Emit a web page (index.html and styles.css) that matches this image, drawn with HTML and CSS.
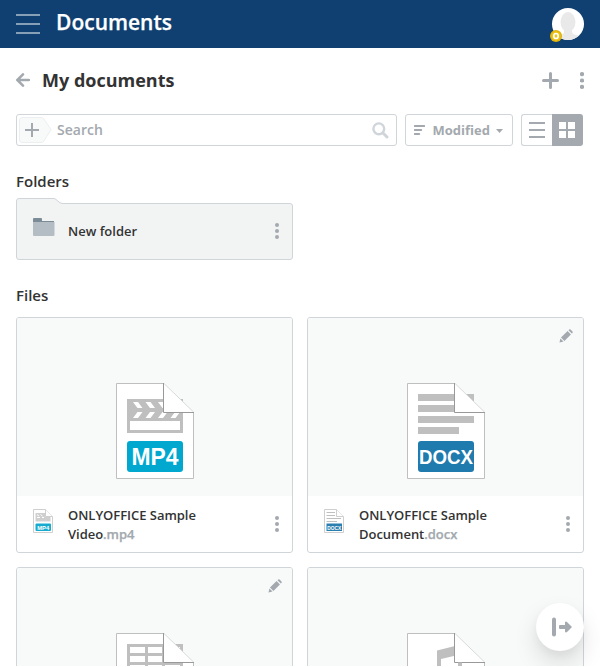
FILE: index.html
```html
<!DOCTYPE html>
<html lang="en">
<head>
<meta charset="utf-8">
<title>Documents</title>
<link rel="stylesheet" href="styles.css">
</head>
<body>
<svg class="defs" width="0" height="0">
  <defs>
    <symbol id="dots" viewBox="0 0 4 16"><circle cx="2" cy="2" r="2"/><circle cx="2" cy="8" r="2"/><circle cx="2" cy="14" r="2"/></symbol>
    <symbol id="pencil" viewBox="0 0 14 14"><path d="M.5 13.5l.9-4 3.1 3.1zM2 8.6l6.6-6.5 3.3 3.3L5.400 12zM9.500 1.300l.7-.7q.7-.5 1.300 0l2 2q.5.6 0 1.300l-.7.7z"/></symbol>
    <symbol id="page" viewBox="0 0 78 96"><path d="M.5.500H48L77.500 29.500V95.500H.5z" fill="#fff" stroke="none"/><path d="M47.500.500H.500V95.500H77.500V29.500" fill="none" stroke="#bfbfbf"/></symbol>
    <symbol id="fold" viewBox="0 0 78 96"><path d="M47.500 0V29.500H78z" fill="#fff"/><path d="M48 .5L77.500 29" fill="none" stroke="#d8dada"/><path d="M47.500 0V29.500H78" fill="none" stroke="#999"/></symbol>
    <symbol id="mp4" viewBox="0 0 78 96">
      <use href="#page"/>
      <path d="M11 16H67V50H11z" fill="#bfbfbf"/><path d="M14 38H64V47H14z" fill="#fff"/>
      <path d="M17 19h5l4.500 6h-5zM29.500 19h5l4.500 6h-5zM42 19h5l4.500 6h-5zM21.500 29h5L22 35h-5zM34 29h5L34.500 35h-5zM46.500 29h5L47 35h-5zM59 29h5L59.500 35h-5z" fill="#fff"/>
      <use href="#fold"/>
      <rect x="11" y="58" width="56" height="31" rx="3" fill="#00a8d0"/>
      <text x="39" y="82" class="tag" textLength="47" lengthAdjust="spacingAndGlyphs">MP4</text>
    </symbol>
    <symbol id="docx" viewBox="0 0 78 96">
      <use href="#page"/>
      <path d="M11 11H67v7H11zM11 22H67v7H11zM11 33H67v7H11zM11 44H52v7H11z" fill="#bfbfbf"/>
      <use href="#fold"/>
      <rect x="11" y="58" width="56" height="31" rx="3" fill="#1f7aae"/>
      <text x="39" y="81" class="tag tag-long" textLength="54" lengthAdjust="spacingAndGlyphs">DOCX</text>
    </symbol>
    <symbol id="xlsx" viewBox="0 0 78 96">
      <use href="#page"/>
      <path d="M11 11H67V51H11zM14 14V20H29V14zM32 14V20H46V14zM49 14V20H64V14zM14 23V29H29V23zM32 23V29H46V23zM49 23V29H64V23zM14 32V38H29V32zM32 32V38H46V32zM49 32V38H64V32z" fill="#bfbfbf" fill-rule="evenodd"/>
      <use href="#fold"/>
    </symbol>
    <symbol id="mp3" viewBox="0 0 78 96">
      <use href="#page"/>
      <path d="M30 17.500L54 11.500V46H51V22L34 26V50H30z" fill="#bfbfbf"/>
      <use href="#fold"/>
      <path d="M51 29.500h4V46h-4z" fill="#bfbfbf"/>
    </symbol>
  </defs>
</svg>
<div class="app">
  <header class="topbar">
    <svg class="burger" width="24" height="20"><path d="M0 1H24M0 10H24M0 19H24" stroke="#86a0b8" stroke-width="2"/></svg>
    <span class="module">Documents</span>
    <div class="user">
      <svg width="38" height="34">
        <defs><clipPath id="avatar"><circle cx="20" cy="16" r="16"/></clipPath></defs>
        <circle cx="20" cy="16" r="16" fill="#fff"/>
        <g clip-path="url(#avatar)" fill="#e9e9e9"><ellipse cx="20" cy="14" rx="7.500" ry="10"/><path d="M16 20h8v4q1 3 5 3l4 1v6H7v-6l4-1q5 0 5-3z"/></g>
        <circle cx="8" cy="28" r="6" fill="#e0b10b"/><circle cx="8" cy="28" r="4.700" fill="#edc315"/><ellipse cx="8" cy="28" rx="2.200" ry="2.500" fill="none" stroke="#fff" stroke-width="1.700"/>
      </svg>
    </div>
  </header>
  <main class="content">
    <div class="heading">
      <svg class="back" width="14" height="14"><path d="M13 7H1.500M7 1.300L1.300 7 7 12.700" fill="none" stroke="#a3a9ae" stroke-width="2.500" stroke-linecap="round"/></svg>
      <h1>My documents</h1>
      <svg class="add" width="17" height="17"><path d="M8.500 1.500V15.500M1.500 8.500H15.500" stroke="#a3a9ae" stroke-width="3" stroke-linecap="round"/></svg>
      <svg class="head-dots" width="4" height="17" viewBox="0 0 4 17"><circle cx="2" cy="2.100" r="2.100"/><circle cx="2" cy="8.500" r="2.100"/><circle cx="2" cy="14.900" r="2.100"/></svg>
    </div>
    <div class="toolbar">
      <div class="search">
        <svg width="33" height="26"><path d="M3 .5H22Q24 .5 25 2L32 12.500 25 24Q24 25.500 22 25.500H3Q.5 25.500.5 23V3Q.5.500 3 .5z" fill="#f8f9f9" stroke="#eceff1"/><path d="M13 6V20M6 13H20" stroke="#a3a9ae" stroke-width="2"/></svg>
        <span class="placeholder">Search</span>
        <svg class="lens" width="17" height="17"><circle cx="6.800" cy="6.800" r="5.400" fill="none" stroke="#d0d5da" stroke-width="2.400"/><path d="M11 11L15 15" stroke="#d0d5da" stroke-width="3" stroke-linecap="round"/></svg>
      </div>
      <div class="sort">
        <svg width="11" height="10"><path d="M.8 1H10.200M.8 5H7.200M.8 9H5.200" stroke="#a3a9ae" stroke-width="2" stroke-linecap="round"/></svg>
        <span>Modified</span>
        <svg class="caret" width="7" height="4"><path d="M0 0H7L3.500 4z" fill="#a3a9ae"/></svg>
      </div>
      <div class="views">
        <div class="view"><svg width="16" height="16"><path d="M0 1H16M0 8H16M0 15H16" stroke="#a3a9ae" stroke-width="2"/></svg></div>
        <div class="view active"><svg width="16" height="16" fill="#fff"><path d="M0 0H7V7H0zM9 0H16V7H9zM0 9H7V16H0zM9 9H16V16H9z"/></svg></div>
      </div>
    </div>
    <h2>Folders</h2>
    <div class="folder">
      <svg class="folder-shape" width="277" height="63"><path d="M3 .5H38Q39 .5 40 1.500L43 4Q45 5.500 47 5.500H274Q276.500 5.500 276.500 8V59Q276.500 61.500 274 61.500H3Q.5 61.500.5 59V3Q.5.500 3 .5z" fill="#f2f4f4" stroke="#d0d5da"/></svg>
      <div class="folder-row">
        <svg class="folder-icon" width="22" height="18"><path d="M0 1Q0 0 1 0H8Q9 0 9 1V3H21V6H0z" fill="#7b8c97"/><path d="M0 4H21.500V17Q21.500 18 20.500 18H1Q0 18 0 17z" fill="#b4bcc4"/></svg>
        <span class="name">New folder</span>
        <svg class="dots" width="4" height="16"><use href="#dots"/></svg>
      </div>
    </div>
    <h2 class="files-title">Files</h2>
    <div class="grid">
      <article class="card">
        <div class="preview"><svg width="78" height="96"><use href="#mp4"/></svg></div>
        <div class="info">
          <svg class="thumb" width="20" height="24" viewBox="0 0 20 24"><path d="M.5.500H12.500L19.500 7.500V23.500H.5z" fill="#fff" stroke="#cfcfcf"/><path d="M2.500 4H12.500V8H17.500V12.500H2.500z" fill="#cfcfcf"/><path d="M4 5.500l2 1.500M7.500 5.500l2 1.500M4 8.500H7M9 8.500H11" stroke="#fff"/><path d="M12.500.500V7.500H19.500" fill="#fff" stroke="#cfcfcf"/><rect x="2.500" y="14.500" width="15.500" height="7.500" rx="1" fill="#16abce"/><text class="tiny" x="10.200" y="20.600" textLength="12" lengthAdjust="spacingAndGlyphs">MP4</text></svg>
          <span class="name">ONLYOFFICE Sample<br>Video<i>.mp4</i></span>
          <svg class="dots" width="4" height="16"><use href="#dots"/></svg>
        </div>
      </article>
      <article class="card">
        <div class="preview"><svg width="78" height="96"><use href="#docx"/></svg><svg class="edit" width="14" height="14"><use href="#pencil"/></svg></div>
        <div class="info">
          <svg class="thumb" width="20" height="24" viewBox="0 0 20 24"><path d="M.5.500H12.500L19.500 7.500V23.500H.5z" fill="#fff" stroke="#cfcfcf"/><path d="M2.500 3.500H11M2.500 6.500H11M2.500 9.500H17M2.500 12.500H13" stroke="#bfbfbf"/><path d="M12.500.500V7.500H19.500" fill="#fff" stroke="#cfcfcf"/><rect x="2.500" y="14.500" width="15.500" height="7.500" fill="#2b7fb0"/><text class="tiny" x="10.200" y="20.600" textLength="14" lengthAdjust="spacingAndGlyphs">DOCX</text></svg>
          <span class="name">ONLYOFFICE Sample<br>Document<i>.docx</i></span>
          <svg class="dots" width="4" height="16"><use href="#dots"/></svg>
        </div>
      </article>
      <article class="card">
        <div class="preview"><svg width="78" height="96"><use href="#xlsx"/></svg><svg class="edit" width="14" height="14"><use href="#pencil"/></svg></div>
      </article>
      <article class="card">
        <div class="preview"><svg width="78" height="96"><use href="#mp3"/></svg></div>
      </article>
    </div>
  </main>
  <div class="fab"><svg width="20" height="20"><path d="M2 2.500V17.500" stroke="#a3a9ae" stroke-width="4" stroke-linecap="round"/><path d="M8 8H13V5.500Q13.500 4 15 5L20 10 15 15Q13.500 16 13 14.500V12H8Q7 12 7 11V9Q7 8 8 8z" fill="#a3a9ae"/></svg></div>
</div>
</body>
</html>
```
FILE: styles.css
```css
* { box-sizing: border-box; }
body { margin: 0; background: #fff; color: #333; font-family: "Open Sans", sans-serif; overflow: hidden; }
svg { display: block; flex: none; }
.defs { position: absolute; }
.app { height: 666px; overflow: hidden; position: relative; }
.topbar { height: 48px; background: #0f4071; display: flex; align-items: center; padding: 0 14px 0 16px; }
.module { color: #fff; font-size: 21px; font-weight: 600; line-height: 30px; margin: -4px 0 0 16px; -webkit-text-stroke: .25px #fff; }
.user { margin: 2px 0 0 auto; width: 38px; }
.content { padding: 0 16px; }
.heading { height: 66px; display: flex; align-items: center; padding-bottom: 2px; }
h1 { margin: -1px auto 0 12px; font-size: 18px; font-weight: 700; line-height: 24px; }
.head-dots { margin-left: 21px; fill: #a3a9ae; }
.toolbar { display: flex; height: 32px; gap: 8px; padding-right: 1px; }
.search, .sort { border: 1px solid #d0d5da; border-radius: 3px; display: flex; align-items: center; color: #a3a9ae; }
.search { width: 381px; padding: 0 7px 0 2px; }
.placeholder { font-size: 14px; font-weight: 600; margin: -2px 0 0 5px; }
.lens { margin-left: auto; }
.sort { width: 108px; padding: 0 9px 0 8px; font-size: 13px; font-weight: 700; }
.sort span { margin-left: 7.5px; }
.caret { margin: 1px 0 0 auto; }
.views { display: flex; width: 62px; }
.view { width: 31px; border: 1px solid #d0d5da; border-right: 0; border-radius: 3px 0 0 3px; display: flex; align-items: center; justify-content: center; }
.view.active { background: #a3a9ae; border: 0; border-radius: 0 3px 3px 0; padding-right: 1px; }
h2 { margin: 25px 0 6px; font-size: 15px; font-weight: 600; line-height: 21px; }
.folder { display: grid; width: 277px; height: 62px; }
.folder > * { grid-area: 1 / 1; }
.folder-row { display: flex; align-items: center; padding: 5px 14px 0 17px; height: 62px; z-index: 1; }
.folder-icon { margin-top: -9px; }
.name { font-size: 13px; font-weight: 600; line-height: 19px; margin-left: 13px; }
.name i { font-style: normal; color: #a3a9ae; -webkit-text-stroke: .25px #a3a9ae; }
.dots { margin: -2px 0 0 auto; fill: #a3a9ae; }
.files-title { margin-bottom: 11px; }
.grid { display: grid; grid-template-columns: 277px 277px; gap: 14px; }
.card { height: 236px; border: 1px solid #d0d5da; border-radius: 3px; overflow: hidden; }
.preview { height: 178px; background: #f8f9f9; padding: 65px 0 0 99px; position: relative; }
.edit { position: absolute; top: 11px; right: 10px; fill: #a3a9ae; }
.info { display: flex; align-items: center; height: 56px; padding: 1px 13px 0 16px; }
.thumb { margin-top: -7px; }
.info .name { margin-left: 15px; letter-spacing: -.03px; }
.tag { font: 700 23px "Liberation Sans", sans-serif; fill: #fff; text-anchor: middle; }
.tag-long { font-size: 20.5px; }
.tiny { font: 700 5.500px "Liberation Sans", sans-serif; fill: #fff; text-anchor: middle; }
.fab { position: absolute; right: 16px; bottom: 15px; width: 48px; height: 48px; border-radius: 50%; background: #fff; box-shadow: 0 12px 24px rgba(0,0,0,.12), 0 4px 8px rgba(0,0,0,.04); display: flex; align-items: center; justify-content: center; padding-left: 4px; }
```
